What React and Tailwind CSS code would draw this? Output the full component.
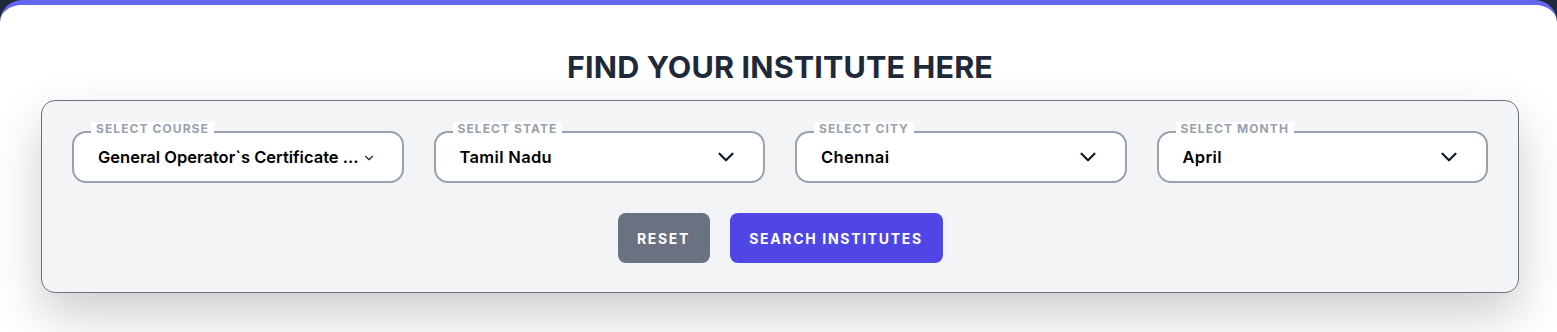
import { ChevronDown } from 'lucide-react';

const selects = [
  { label: 'SELECT COURSE', value: 'General Operator`s Certificate ...', compact: true },
  { label: 'SELECT STATE', value: 'Tamil Nadu' },
  { label: 'SELECT CITY', value: 'Chennai' },
  { label: 'SELECT MONTH', value: 'April' },
];

function SelectBox({ label, value, compact }) {
  return (
    <div className="relative">
      <span className="absolute left-[19px] top-[-9px] bg-white px-[5px] text-[12px] font-bold leading-[14px] tracking-[0.09em] text-gray-400">
        {label}
      </span>
      <div className="flex h-[52px] items-center rounded-[14px] border-2 border-gray-400 bg-white pl-[24px] pr-[24px]">
        {compact ? (
          <>
            <span className="text-[16.5px] font-semibold text-black">{value}</span>
            <ChevronDown size={14} strokeWidth={2} className="ml-[3px] mt-[1px] text-gray-800" />
          </>
        ) : (
          <>
            <span className="text-[16.5px] font-semibold tracking-[0.02em] text-black">{value}</span>
            <ChevronDown size={26} strokeWidth={2} className="ml-auto text-gray-900" />
          </>
        )}
      </div>
    </div>
  );
}

function App() {
  return (
    <div className="h-[332px] w-full overflow-hidden bg-gray-800" style={{ fontFamily: 'Inter, "Noto Sans", sans-serif' }}>
      <div className="h-[360px] rounded-t-[22px] border-t-[5px] border-[#6366f1] bg-white pl-[41px] pr-[38px] pt-[44px]">
        <h1 className="mb-4 text-center text-[30.5px] font-bold leading-[35px] tracking-[0.005em] text-gray-800">
          FIND YOUR INSTITUTE HERE
        </h1>
        <div className="rounded-[14px] border border-gray-500 bg-gray-100 px-[30px] pb-[29px] pt-[30px] shadow-[0_22px_50px_rgba(0,0,0,0.2)]">
          <div className="grid grid-cols-4 gap-[30px]">
            {selects.map((item) => (
              <SelectBox key={item.label} {...item} />
            ))}
          </div>
          <div className="mt-[30px] flex justify-center gap-5">
            <button className="h-[50px] w-[92px] rounded-lg bg-gray-500 text-[14px] font-bold tracking-[0.12em] text-white">
              RESET
            </button>
            <button className="h-[50px] w-[213px] rounded-lg bg-[#4f46e5] text-[14px] font-bold tracking-[0.12em] text-white">
              SEARCH INSTITUTES
            </button>
          </div>
        </div>
      </div>
    </div>
  );
}

export default App;
